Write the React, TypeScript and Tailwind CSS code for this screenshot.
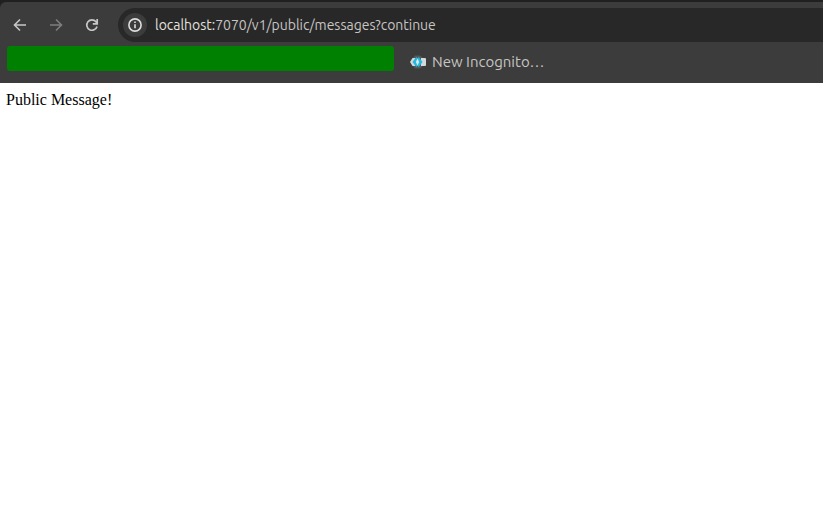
function NavigationButtons() {
  return (
    <div className="flex h-[34px] w-[118px] shrink-0 items-center">
      <svg aria-label="Back" className="ml-3 size-4 text-[#c9c7c6]" viewBox="0 0 16 16" fill="none" stroke="currentColor" strokeWidth="1.6">
        <path d="M14 8H3M8 2.5 2.5 8 8 13.5" />
      </svg>
      <svg aria-label="Forward" className="ml-5 size-4 text-[#7f7e7e]" viewBox="0 0 16 16" fill="none" stroke="currentColor" strokeWidth="1.6">
        <path d="M2 8h11M8 2.5 13.5 8 8 13.5" />
      </svg>
      <svg aria-label="Reload" className="ml-5 size-4 text-[#c9c7c6]" viewBox="0 0 16 16" fill="none" stroke="currentColor" strokeWidth="1.7">
        <path d="M13 9.4A5.2 5.2 0 1 1 12 4.7L13 6.2M13.2 2v4.8H8.8" />
      </svg>
    </div>
  );
}

function AddressBar() {
  return (
    <div className="flex h-[34px] min-w-0 flex-1 items-center rounded-l-full bg-[#282828] pl-[5px]">
      <div className="flex size-6 shrink-0 items-center justify-center rounded-full bg-[#3c3c3c]">
        <svg className="size-4 text-[#e1dfdd]" viewBox="0 0 16 16" fill="none">
          <circle cx="8" cy="8" r="6.1" stroke="currentColor" strokeWidth="1.6" />
          <path d="M8 7.2v4M8 4.4V6" stroke="currentColor" strokeWidth="1.6" />
        </svg>
      </div>
      <div className="ml-2 whitespace-nowrap font-['Ubuntu','Noto_Sans',sans-serif] text-sm leading-5 tracking-[-0.02px] text-[#c7c5c3]">
        <span className="text-[#e3e1df]">localhost:</span>7070/v1/public/messages?continue
      </div>
    </div>
  );
}

function Bookmarks() {
  return (
    <div className="flex h-[41px] items-start pl-[7px] pt-1">
      <div className="h-[25px] w-[387px] rounded-[3px] bg-[#008000]" />
      <div className="ml-4 mt-1 flex h-6 items-center">
        <svg className="h-4 w-4" viewBox="0 0 16 16">
          <path d="M5 1.5h5L13 4v8l-3 2.5H5L3 12V4z" fill="#53585a" />
          <path d="M2.5 4H5v8H2.5L0 8z" fill="#d3d8da" />
          <path d="M11 4h4q1 0 1 1v6q0 1-1 1h-4z" fill="#d3d8da" />
          <path d="M6.2 3 2.5 8l3.7 5L8 11.2 6 8l2-3.2z" fill="#22b9e0" />
          <path d="M8.8 3 12.5 8l-3.7 5L7 11.2 9 8 7 4.8z" fill="#22b9e0" />
          <path d="M7.5 4.5 5.8 8l1.7 3.5L9.2 8z" fill="#d9edf1" />
        </svg>
        <span className="ml-1.5 whitespace-nowrap font-['Ubuntu','Noto_Sans',sans-serif] text-[15px] leading-5 text-[#c7c5c3]">New Incognito…</span>
      </div>
    </div>
  );
}

export default function App() {
  return (
    <div className="h-[521px] w-full overflow-hidden bg-white">
      <header className="h-[83px] bg-[#202020] pt-0.5">
        <div className="h-[81px] rounded-tl-md bg-[#3c3c3c] pt-1.5">
          <div className="flex">
            <NavigationButtons />
            <AddressBar />
          </div>
          <Bookmarks />
        </div>
      </header>
      <main className="px-1.5 pt-2 font-['Liberation_Serif',serif] text-base leading-[18px] text-black">Public Message!</main>
    </div>
  );
}
